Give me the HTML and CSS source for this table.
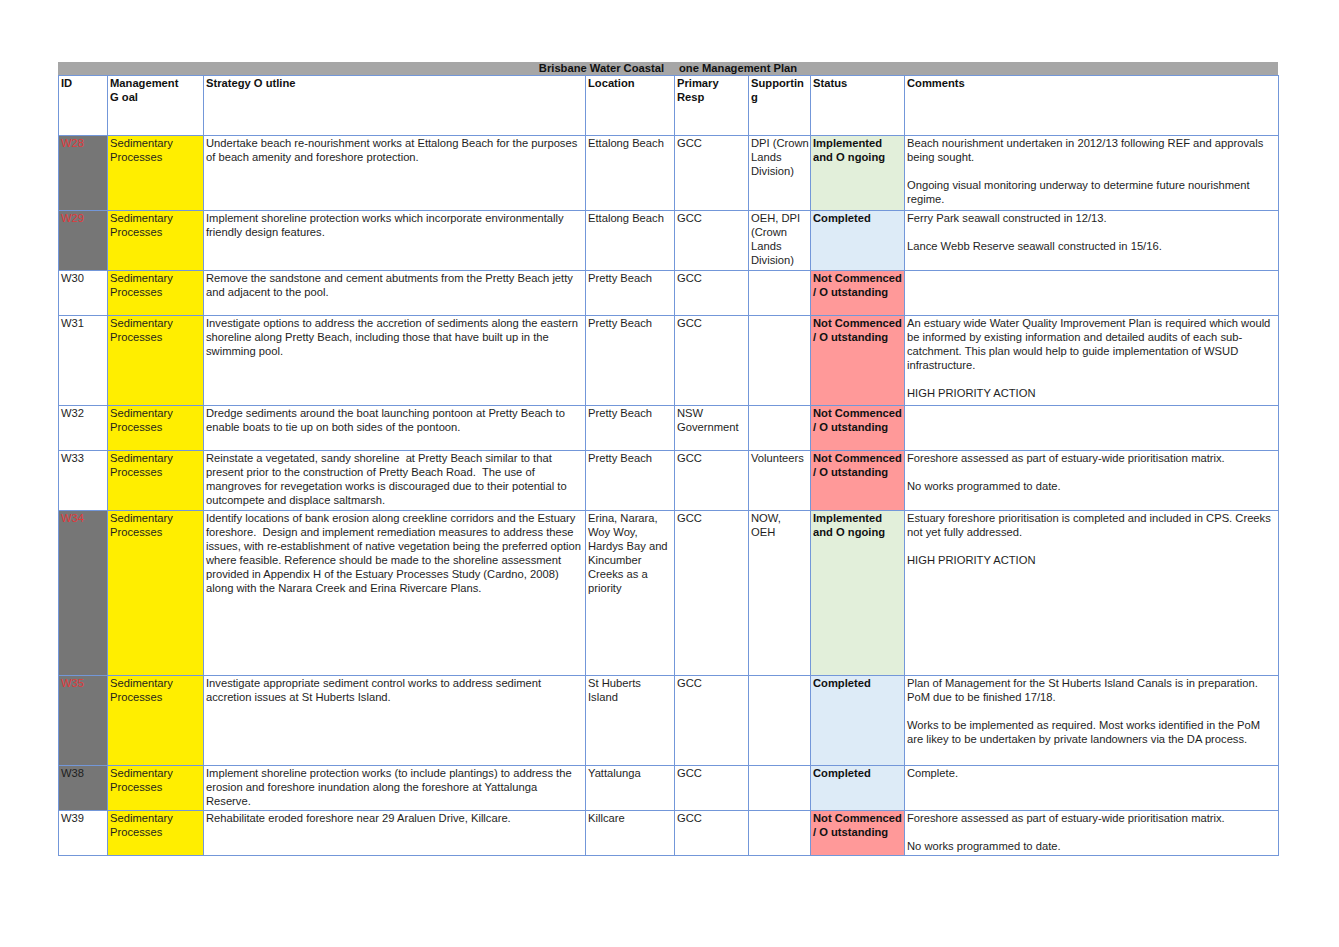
FILE: index.html
```html
<!DOCTYPE html>
<html lang="en">
<head>
<meta charset="utf-8">
<title>Brisbane Water Coastal Zone Management Plan</title>
<link rel="stylesheet" href="styles.css">
</head>
<body>
<div class="page">
  <div class="title">Brisbane Water Coastal<span class="gap"></span>one Management Plan</div>
  <table class="plan">
    <colgroup>
      <col class="c-id"><col class="c-goal"><col class="c-strat"><col class="c-loc">
      <col class="c-prim"><col class="c-sup"><col class="c-status"><col class="c-com">
    </colgroup>
    <tr class="head h60">
      <th>ID</th><th>Management<br>G oal</th><th>Strategy O utline</th><th>Location</th>
      <th>Primary<br>Resp</th><th>Supportin<br>g</th><th>Status</th><th>Comments</th>
    </tr>
    <tr class="h75">
      <td class="id grey red">W28</td><td class="goal">Sedimentary Processes</td>
      <td>Undertake beach re-nourishment works at Ettalong Beach for the purposes of beach amenity and foreshore protection.</td>
      <td>Ettalong Beach</td><td>GCC</td><td><span class="nw">DPI (Crown</span> Lands Division)</td>
      <td class="st green">Implemented and O ngoing</td>
      <td>Beach nourishment undertaken in 2012/13 following REF and approvals being sought.<br><br>Ongoing visual monitoring underway to determine future nourishment regime.</td>
    </tr>
    <tr class="h60">
      <td class="id grey red">W29</td><td class="goal">Sedimentary Processes</td>
      <td>Implement shoreline protection works which incorporate environmentally friendly design features.</td>
      <td>Ettalong Beach</td><td>GCC</td><td>OEH, DPI (Crown Lands Division)</td>
      <td class="st blue">Completed</td>
      <td>Ferry Park seawall constructed in 12/13.<br><br>Lance Webb Reserve seawall constructed in 15/16.</td>
    </tr>
    <tr class="h45">
      <td class="id">W30</td><td class="goal">Sedimentary Processes</td>
      <td>Remove the sandstone and cement abutments from the Pretty Beach jetty and adjacent to the pool.</td>
      <td>Pretty Beach</td><td>GCC</td><td></td>
      <td class="st pink">Not Commenced / O utstanding</td>
      <td></td>
    </tr>
    <tr class="h90">
      <td class="id">W31</td><td class="goal">Sedimentary Processes</td>
      <td>Investigate options to address the accretion of sediments along the eastern shoreline along Pretty Beach, including those that have built up in the swimming pool.</td>
      <td>Pretty Beach</td><td>GCC</td><td></td>
      <td class="st pink">Not Commenced / O utstanding</td>
      <td>An estuary wide Water Quality Improvement Plan is required which would be informed by existing information and detailed audits of each sub-catchment. This plan would help to guide implementation of WSUD infrastructure.<br><br>HIGH PRIORITY ACTION</td>
    </tr>
    <tr class="h45">
      <td class="id">W32</td><td class="goal">Sedimentary Processes</td>
      <td>Dredge sediments around the boat launching pontoon at Pretty Beach to enable boats to tie up on both sides of the pontoon.</td>
      <td>Pretty Beach</td><td>NSW Government</td><td></td>
      <td class="st pink">Not Commenced / O utstanding</td>
      <td></td>
    </tr>
    <tr class="h60">
      <td class="id">W33</td><td class="goal">Sedimentary Processes</td>
      <td>Reinstate a vegetated, sandy shoreline&nbsp; at Pretty Beach similar to that present prior to the construction of Pretty Beach Road.&nbsp; The use of mangroves for revegetation works is discouraged due to their potential to outcompete and displace saltmarsh.</td>
      <td>Pretty Beach</td><td>GCC</td><td>Volunteers</td>
      <td class="st pink">Not Commenced / O utstanding</td>
      <td>Foreshore assessed as part of estuary-wide prioritisation matrix.<br><br>No works programmed to date.</td>
    </tr>
    <tr class="h165">
      <td class="id grey red">W34</td><td class="goal">Sedimentary Processes</td>
      <td>Identify locations of bank erosion along creekline corridors and the Estuary foreshore.&nbsp; Design and implement remediation measures to address these issues, with re-establishment of native vegetation being the preferred option where feasible. Reference should be made to the shoreline assessment provided in Appendix H of the Estuary Processes Study (Cardno, 2008) along with the Narara Creek and Erina Rivercare Plans.</td>
      <td>Erina, Narara, Woy Woy, Hardys Bay and Kincumber Creeks as a priority</td><td>GCC</td><td>NOW,<br>OEH</td>
      <td class="st green">Implemented and O ngoing</td>
      <td>Estuary foreshore prioritisation is completed and included in CPS. Creeks not yet fully addressed.<br><br>HIGH PRIORITY ACTION</td>
    </tr>
    <tr class="h90">
      <td class="id grey red">W35</td><td class="goal">Sedimentary Processes</td>
      <td>Investigate appropriate sediment control works to address sediment accretion issues at St Huberts Island.</td>
      <td>St Huberts<br>Island</td><td>GCC</td><td></td>
      <td class="st blue">Completed</td>
      <td>Plan of Management for the St Huberts Island Canals is in preparation. PoM due to be finished 17/18.<br><br>Works to be implemented as required. Most works identified in the PoM are likey to be undertaken by private landowners via the DA process.</td>
    </tr>
    <tr class="h45">
      <td class="id grey">W38</td><td class="goal">Sedimentary Processes</td>
      <td>Implement shoreline protection works (to include plantings) to address the erosion and foreshore inundation along the foreshore at Yattalunga<br>Reserve.</td>
      <td>Yattalunga</td><td>GCC</td><td></td>
      <td class="st blue">Completed</td>
      <td>Complete.</td>
    </tr>
    <tr class="h45">
      <td class="id">W39</td><td class="goal">Sedimentary Processes</td>
      <td>Rehabilitate eroded foreshore near 29 Araluen Drive, Killcare.</td>
      <td>Killcare</td><td>GCC</td><td></td>
      <td class="st pink">Not Commenced / O utstanding</td>
      <td>Foreshore assessed as part of estuary-wide prioritisation matrix.<br><br>No works programmed to date.</td>
    </tr>
  </table>
</div>
</body>
</html>
```
FILE: styles.css
```css
html, body {
  margin: 0;
  padding: 0;
  background: #ffffff;
}
.page {
  padding: 62px 0 0 58px;
  width: 1220px;
  font-family: "Liberation Sans", Arial, sans-serif;
  font-size: 11.2px;
  line-height: 14px;
  color: #1e1e1e;
}
.title {
  height: 13px;
  line-height: 13px;
  background: #a6a6a6;
  text-align: center;
  font-weight: bold;
  color: #111;
  width: 1220px;
}
.title .gap {
  display: inline-block;
  width: 15px;
}
.plan {
  border-collapse: collapse;
  table-layout: fixed;
  width: 1220px;
}
.c-id { width: 49px; }
.c-goal { width: 96px; }
.c-strat { width: 382px; }
.c-loc { width: 89px; }
.c-prim { width: 74px; }
.c-sup { width: 62px; }
.c-status { width: 94px; }
.c-com { width: 374px; }
.plan th, .plan td {
  border: 1px solid #7397d9;
  padding: 0 0 0 2px;
  vertical-align: top;
  text-align: left;
  overflow: hidden;
}
.plan th {
  font-weight: bold;
  color: #111;
}
.nw { white-space: nowrap; }
.h45 { height: 45px; }
.h60 { height: 60px; }
.h75 { height: 75px; }
.h90 { height: 90px; }
.h165 { height: 165px; }
.grey { background: #767676; }
.red { color: #e0393c; }
.goal { background: #ffee00; }
.st { font-weight: bold; color: #111; }
.green { background: #e2efda; }
.blue { background: #ddebf7; }
.pink { background: #ff9999; }
```
